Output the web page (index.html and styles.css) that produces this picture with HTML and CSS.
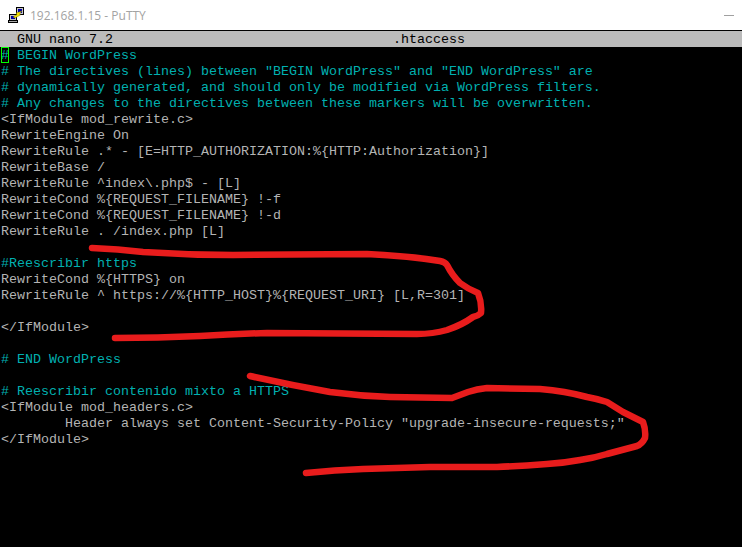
FILE: index.html
```html
<!DOCTYPE html>
<html lang="en">
<head>
<meta charset="utf-8">
<title>192.168.1.15 - PuTTY</title>
<link rel="stylesheet" href="styles.css">
</head>
<body>
<div class="window">
  <header class="titlebar">
    <svg class="app-icon" width="17" height="17" viewBox="0 0 17 17" shape-rendering="crispEdges">
      <rect x="8.5" y="0.5" width="7" height="7" fill="#c6c6c6" stroke="#000"/>
      <rect x="10" y="2" width="4" height="4" fill="#0000a8"/>
      <rect x="1.5" y="7.5" width="7" height="6" fill="#c6c6c6" stroke="#000"/>
      <rect x="3" y="9" width="4" height="3" fill="#0000a8"/>
      <rect x="0.5" y="13.5" width="9" height="2" fill="#a8a8a8" stroke="#000"/>
      <path d="M5 10 L9 7.5 L8 6 L14 4 L11.5 7 L12.5 8 L7 11 Z" fill="#f5e400" stroke="#6a6000" stroke-width="0.4" shape-rendering="auto"/>
    </svg>
    <span class="title">192.168.1.15 - PuTTY</span>
    <span class="minimize"></span>
  </header>
  <main class="terminal">
    <div class="statusbar"><span class="status-left">GNU nano 7.2</span><span class="status-file">.htaccess</span></div>
    <pre class="screen"><span class="c"><span class="cursor">#</span> BEGIN WordPress
# The directives (lines) between "BEGIN WordPress" and "END WordPress" are
# dynamically generated, and should only be modified via WordPress filters.
# Any changes to the directives between these markers will be overwritten.</span>
&lt;IfModule mod_rewrite.c&gt;
RewriteEngine On
RewriteRule .* - [E=HTTP_AUTHORIZATION:%{HTTP:Authorization}]
RewriteBase /
RewriteRule ^index\.php$ - [L]
RewriteCond %{REQUEST_FILENAME} !-f
RewriteCond %{REQUEST_FILENAME} !-d
RewriteRule . /index.php [L]

<span class="c">#Reescribir https</span>
RewriteCond %{HTTPS} on
RewriteRule ^ https://%{HTTP_HOST}%{REQUEST_URI} [L,R=301]

&lt;/IfModule&gt;

<span class="c"># END WordPress</span>

<span class="c"># Reescribir contenido mixto a HTTPS</span>
&lt;IfModule mod_headers.c&gt;
        Header always set Content-Security-Policy "upgrade-insecure-requests;"
&lt;/IfModule&gt;</pre>
  </main>
  <svg class="scribble" width="742" height="547" viewBox="0 0 742 547" fill="none">
    <path class="stroke" d="M92 248 Q118 249 143 252 Q188 255 233 255 L367 254 Q410 256 440 261 Q445 262 447 265 Q452 275 460 283 Q468 289 478 293 Q482 303 481 313 Q478 316 473 317 Q462 325 447 330 Q433 334 417 334 L267 333 Q232 334 200 336 Q158 338 115 338"/>
    <path class="stroke" d="M250 376 Q290 385 330 392 Q360 396 390 397 L452 398 Q460 395 468 392 Q477 389 487 388 L540 389 Q565 391 587 397 Q598 399 607 402 Q615 407 623 412 L643 422 Q646 430 645 438 Q642 444 637 446 Q622 450 607 454 Q594 458 580 460 Q564 463 547 464 Q520 466 497 467 L430 467 Q395 468 363 469 Q335 470 306 473"/>
  </svg>
</div>
</body>
</html>
```
FILE: styles.css
```css
html, body {
  margin: 0;
  padding: 0;
  background: #000;
}
.window {
  position: relative;
  width: 742px;
  height: 547px;
  overflow: hidden;
  display: flex;
  flex-direction: column;
}
.titlebar {
  flex: 0 0 30px;
  box-sizing: border-box;
  background: #fff;
  display: flex;
  align-items: center;
  padding: 0 8px 0 8px;
}
.app-icon {
  flex: none;
  margin-right: 5px;
}
.title {
  flex: 1;
  font: 12px "Open Sans", "Liberation Sans", sans-serif;
  color: #a3a3a3;
}
.minimize {
  width: 10px;
  height: 1px;
  background: #a0a0a0;
}
.terminal {
  flex: 1;
  border-top: 1px solid #000;
  background: #000;
  display: flex;
  flex-direction: column;
}
.statusbar, .screen {
  font-family: "Liberation Mono", "Courier New", monospace;
  font-size: 13.33px;
  line-height: 16px;
}
.statusbar {
  height: 16px;
  line-height: 18px;
  background: #bbb;
  color: #000;
  white-space: pre;
  display: flex;
}
.status-left {
  margin-left: 17px;
  width: 376px;
}
.screen {
  margin: 0;
  padding: 1px 0 0 1px;
  color: #b4b4b4;
  white-space: pre;
}
.c {
  color: #00b0b0;
}
.cursor {
  position: relative;
}
.cursor::after {
  content: "";
  position: absolute;
  left: 0;
  top: -1px;
  width: 8px;
  height: 16px;
  box-sizing: border-box;
  border: 1px solid #00ff00;
}
.scribble {
  position: absolute;
  left: 0;
  top: 0;
}
.stroke {
  stroke: #e81c1c;
  stroke-width: 6.5;
  stroke-linecap: round;
  stroke-linejoin: round;
}
```
